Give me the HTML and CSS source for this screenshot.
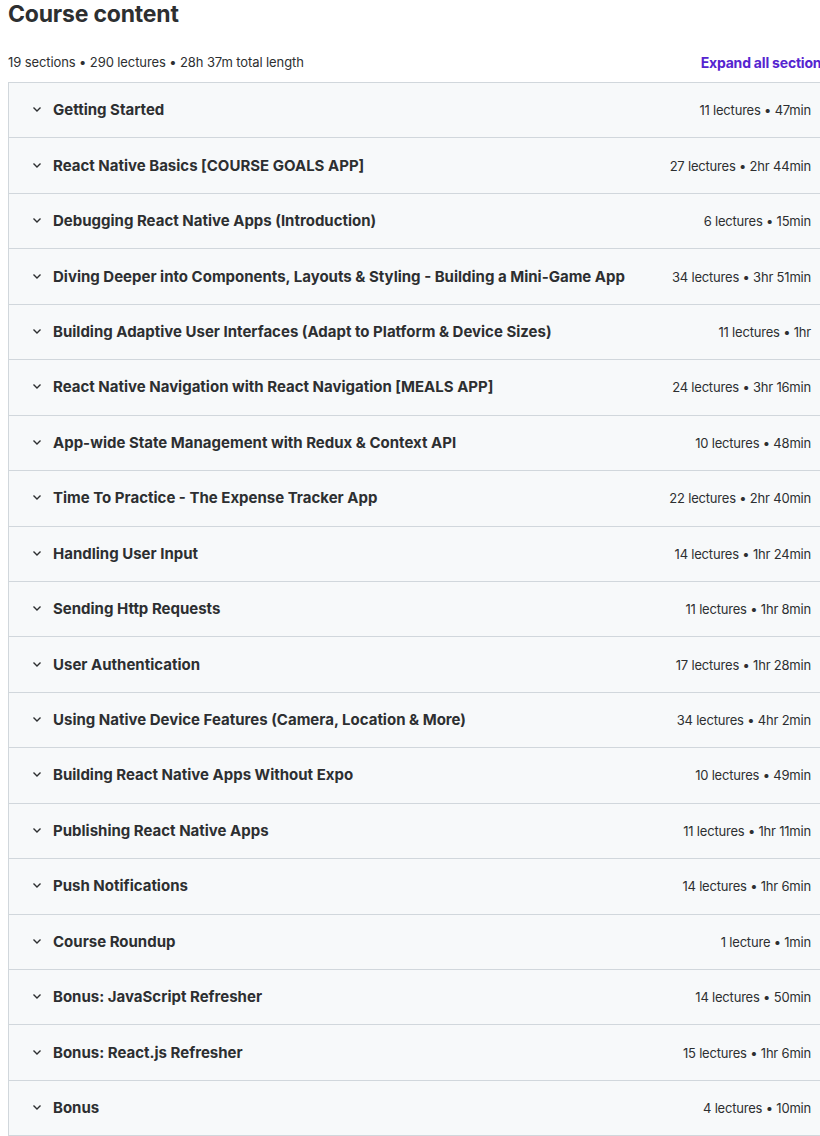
FILE: index.html
```html
<!DOCTYPE html>
<html>
<head>
    <meta charset="UTF-8">
    <meta name="viewport" content="width=device-width, initial-scale=1.0">
    <title>Course content</title>
    <link rel="stylesheet" href="styles.css">
</head>
<body>
    <div class="wrap">
        <h2 class="title">Course content</h2>
        <div class="meta">
            <span>19 sections • 290 lectures • 28h 37m total length</span>
            <button class="expand">Expand all sections</button>
        </div>
        <div class="sections">
            <div class="section"><span class="chev"><svg width="12" height="12" viewBox="0 0 12 12"><path d="M2.5 4.5 6 8l3.5-3.5" fill="none" stroke="#2d2f31" stroke-width="1.4"/></svg></span><span class="name">Getting Started</span><span class="info">11 lectures • 47min</span></div>
            <div class="section"><span class="chev"><svg width="12" height="12" viewBox="0 0 12 12"><path d="M2.5 4.5 6 8l3.5-3.5" fill="none" stroke="#2d2f31" stroke-width="1.4"/></svg></span><span class="name">React Native Basics [COURSE GOALS APP]</span><span class="info">27 lectures • 2hr 44min</span></div>
            <div class="section"><span class="chev"><svg width="12" height="12" viewBox="0 0 12 12"><path d="M2.5 4.5 6 8l3.5-3.5" fill="none" stroke="#2d2f31" stroke-width="1.4"/></svg></span><span class="name">Debugging React Native Apps (Introduction)</span><span class="info">6 lectures • 15min</span></div>
            <div class="section"><span class="chev"><svg width="12" height="12" viewBox="0 0 12 12"><path d="M2.5 4.5 6 8l3.5-3.5" fill="none" stroke="#2d2f31" stroke-width="1.4"/></svg></span><span class="name">Diving Deeper into Components, Layouts &amp; Styling - Building a Mini-Game App</span><span class="info">34 lectures • 3hr 51min</span></div>
            <div class="section"><span class="chev"><svg width="12" height="12" viewBox="0 0 12 12"><path d="M2.5 4.5 6 8l3.5-3.5" fill="none" stroke="#2d2f31" stroke-width="1.4"/></svg></span><span class="name">Building Adaptive User Interfaces (Adapt to Platform &amp; Device Sizes)</span><span class="info">11 lectures • 1hr</span></div>
            <div class="section"><span class="chev"><svg width="12" height="12" viewBox="0 0 12 12"><path d="M2.5 4.5 6 8l3.5-3.5" fill="none" stroke="#2d2f31" stroke-width="1.4"/></svg></span><span class="name">React Native Navigation with React Navigation [MEALS APP]</span><span class="info">24 lectures • 3hr 16min</span></div>
            <div class="section"><span class="chev"><svg width="12" height="12" viewBox="0 0 12 12"><path d="M2.5 4.5 6 8l3.5-3.5" fill="none" stroke="#2d2f31" stroke-width="1.4"/></svg></span><span class="name">App-wide State Management with Redux &amp; Context API</span><span class="info">10 lectures • 48min</span></div>
            <div class="section"><span class="chev"><svg width="12" height="12" viewBox="0 0 12 12"><path d="M2.5 4.5 6 8l3.5-3.5" fill="none" stroke="#2d2f31" stroke-width="1.4"/></svg></span><span class="name">Time To Practice - The Expense Tracker App</span><span class="info">22 lectures • 2hr 40min</span></div>
            <div class="section"><span class="chev"><svg width="12" height="12" viewBox="0 0 12 12"><path d="M2.5 4.5 6 8l3.5-3.5" fill="none" stroke="#2d2f31" stroke-width="1.4"/></svg></span><span class="name">Handling User Input</span><span class="info">14 lectures • 1hr 24min</span></div>
            <div class="section"><span class="chev"><svg width="12" height="12" viewBox="0 0 12 12"><path d="M2.5 4.5 6 8l3.5-3.5" fill="none" stroke="#2d2f31" stroke-width="1.4"/></svg></span><span class="name">Sending Http Requests</span><span class="info">11 lectures • 1hr 8min</span></div>
            <div class="section"><span class="chev"><svg width="12" height="12" viewBox="0 0 12 12"><path d="M2.5 4.5 6 8l3.5-3.5" fill="none" stroke="#2d2f31" stroke-width="1.4"/></svg></span><span class="name">User Authentication</span><span class="info">17 lectures • 1hr 28min</span></div>
            <div class="section"><span class="chev"><svg width="12" height="12" viewBox="0 0 12 12"><path d="M2.5 4.5 6 8l3.5-3.5" fill="none" stroke="#2d2f31" stroke-width="1.4"/></svg></span><span class="name">Using Native Device Features (Camera, Location &amp; More)</span><span class="info">34 lectures • 4hr 2min</span></div>
            <div class="section"><span class="chev"><svg width="12" height="12" viewBox="0 0 12 12"><path d="M2.5 4.5 6 8l3.5-3.5" fill="none" stroke="#2d2f31" stroke-width="1.4"/></svg></span><span class="name">Building React Native Apps Without Expo</span><span class="info">10 lectures • 49min</span></div>
            <div class="section"><span class="chev"><svg width="12" height="12" viewBox="0 0 12 12"><path d="M2.5 4.5 6 8l3.5-3.5" fill="none" stroke="#2d2f31" stroke-width="1.4"/></svg></span><span class="name">Publishing React Native Apps</span><span class="info">11 lectures • 1hr 11min</span></div>
            <div class="section"><span class="chev"><svg width="12" height="12" viewBox="0 0 12 12"><path d="M2.5 4.5 6 8l3.5-3.5" fill="none" stroke="#2d2f31" stroke-width="1.4"/></svg></span><span class="name">Push Notifications</span><span class="info">14 lectures • 1hr 6min</span></div>
            <div class="section"><span class="chev"><svg width="12" height="12" viewBox="0 0 12 12"><path d="M2.5 4.5 6 8l3.5-3.5" fill="none" stroke="#2d2f31" stroke-width="1.4"/></svg></span><span class="name">Course Roundup</span><span class="info">1 lecture • 1min</span></div>
            <div class="section"><span class="chev"><svg width="12" height="12" viewBox="0 0 12 12"><path d="M2.5 4.5 6 8l3.5-3.5" fill="none" stroke="#2d2f31" stroke-width="1.4"/></svg></span><span class="name">Bonus: JavaScript Refresher</span><span class="info">14 lectures • 50min</span></div>
            <div class="section"><span class="chev"><svg width="12" height="12" viewBox="0 0 12 12"><path d="M2.5 4.5 6 8l3.5-3.5" fill="none" stroke="#2d2f31" stroke-width="1.4"/></svg></span><span class="name">Bonus: React.js Refresher</span><span class="info">15 lectures • 1hr 6min</span></div>
            <div class="section"><span class="chev"><svg width="12" height="12" viewBox="0 0 12 12"><path d="M2.5 4.5 6 8l3.5-3.5" fill="none" stroke="#2d2f31" stroke-width="1.4"/></svg></span><span class="name">Bonus</span><span class="info">4 lectures • 10min</span></div>
        </div>
    </div>
</body>
</html>
```

FILE: styles.css
```css
*{ margin: 0; padding: 0; box-sizing: border-box; }
html, body{ overflow: hidden; background: #fff; }
body{ font-family: Inter, "Noto Sans", sans-serif; color: #2d2f31; }
.wrap{ width: 836px; padding-left: 8px; }
.title{ font-size: 23px; font-weight: 700; line-height: 28px; letter-spacing: -0.2px; }
.meta{ display: flex; justify-content: space-between; align-items: center; margin-top: 20px; height: 28px; font-size: 13px; letter-spacing: -0.1px; }
.expand{ border: none; background: none; font-family: inherit; font-size: 14px; font-weight: 700; color: #5624d0; letter-spacing: -0.2px; margin-right: 7px; }
.sections{ border: 1px solid #d1d7dc; border-bottom: none; margin-top: 6px; }
.section{ display: flex; align-items: center; height: 55.45px; padding: 0 24px 0 22px; background: #f7f9fa; border-bottom: 1px solid #d1d7dc; }
.chev{ display: flex; width: 22px; margin-top: -2px; }
.name{ flex: 1; font-size: 15px; font-weight: 700; letter-spacing: 0; margin-top: -1px; }
.info{ font-size: 13px; letter-spacing: -0.2px; }
```
